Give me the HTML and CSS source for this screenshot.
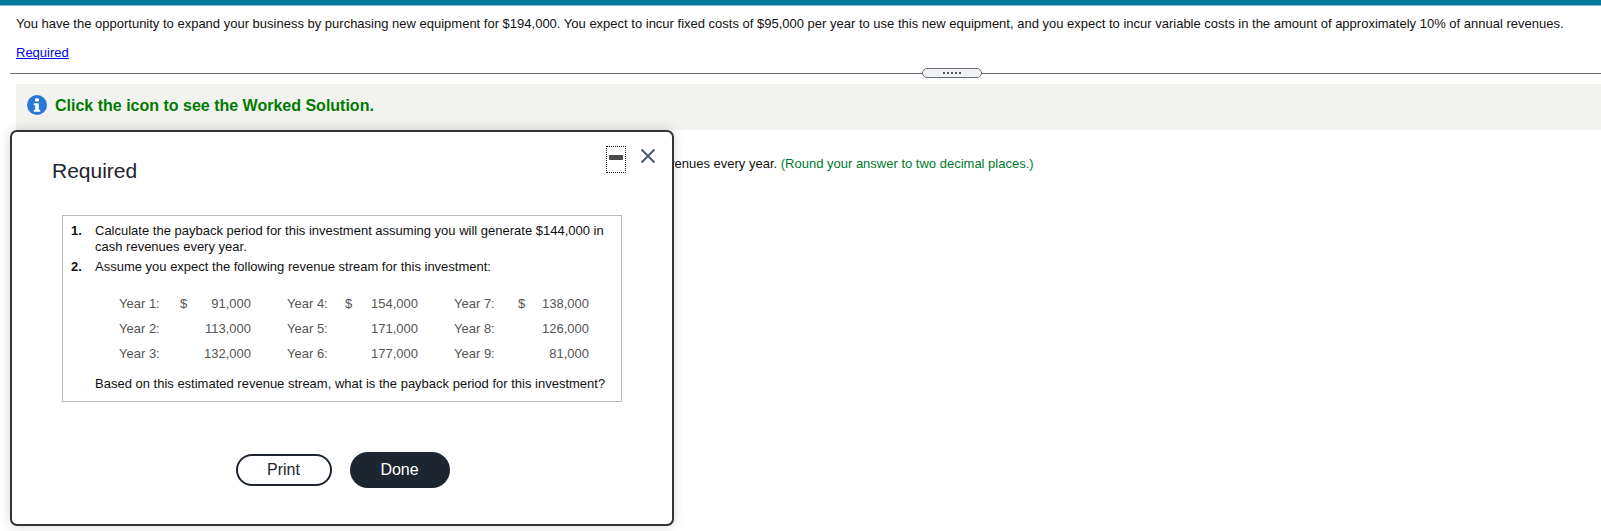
FILE: index.html
```html
<!DOCTYPE html>
<html lang="en">
<head>
<meta charset="utf-8">
<title>Payback period</title>
<link rel="stylesheet" href="styles.css">
</head>
<body>
<div class="topbar"></div>
<main class="page">
  <p class="question">You have the opportunity to expand your business by purchasing new equipment for $194,000. You expect to incur fixed costs of $95,000 per year to use this new equipment, and you expect to incur variable costs in the amount of approximately 10% of annual revenues.</p>
  <p class="req-line"><a href="#" class="req-link">Required</a></p>
  <div class="divider"><span class="handle"><i></i><i></i><i></i><i></i><i></i></span></div>
  <div class="banner">
    <svg class="info" viewBox="0 0 20 20" width="20" height="20" aria-hidden="true"><circle cx="10" cy="10" r="10" fill="#2a78d6"/><rect x="8" y="3.2" width="4" height="3.4" rx="1.4" fill="#fff"/><path d="M6.8 8.2h5v6.6h1.4v2H6.8v-2h1.4v-4.600H6.800z" fill="#fff"/></svg>
    <span class="banner-text">Click the icon to see the Worked Solution.</span>
  </div>
  <p class="prompt">venues every year. <span class="green">(Round your answer to two decimal places.)</span></p>
</main>
<section class="modal">
  <header class="modal-head">
    <h2 class="modal-title">Required</h2>
    <div class="modal-tools">
      <span class="minimize"><span class="minimize-bar"></span></span>
      <svg class="close" viewBox="0 0 16 16" width="16" height="16" aria-hidden="true"><path d="M1.500 1.500l13 13M14.500 1.500l-13 13" stroke="#4d5866" stroke-width="2" fill="none"/></svg>
    </div>
  </header>
  <div class="box">
    <ol class="steps">
      <li class="step"><b class="num">1.</b><span>Calculate the payback period for this investment assuming you will generate $144,000 in cash revenues every year.</span></li>
      <li class="step"><b class="num">2.</b><span>Assume you expect the following revenue stream for this investment:</span></li>
    </ol>
    <table class="years">
      <tr><td class="y1">Year 1:</td><td class="d1">$</td><td class="v1">91,000</td><td class="y2">Year 4:</td><td class="d2">$</td><td class="v2">154,000</td><td class="y3">Year 7:</td><td class="d3">$</td><td class="v3">138,000</td></tr>
      <tr><td class="y1">Year 2:</td><td class="d1"></td><td class="v1">113,000</td><td class="y2">Year 5:</td><td class="d2"></td><td class="v2">171,000</td><td class="y3">Year 8:</td><td class="d3"></td><td class="v3">126,000</td></tr>
      <tr><td class="y1">Year 3:</td><td class="d1"></td><td class="v1">132,000</td><td class="y2">Year 6:</td><td class="d2"></td><td class="v2">177,000</td><td class="y3">Year 9:</td><td class="d3"></td><td class="v3">81,000</td></tr>
    </table>
    <p class="based">Based on this estimated revenue stream, what is the payback period for this investment?</p>
  </div>
  <div class="actions">
    <button class="btn btn-print" type="button">Print</button>
    <button class="btn btn-done" type="button">Done</button>
  </div>
</section>
</body>
</html>
```
FILE: styles.css
```css
* { box-sizing: border-box; }
html, body { margin: 0; padding: 0; background: #fff; }
body {
  font-family: "Liberation Sans", Arial, sans-serif;
  font-size: 13px;
  color: #111;
  height: 531px;
  overflow: hidden;
  position: relative;
}
.topbar { height: 6px; background: #007a9c; border-bottom: 1px solid #7fbccd; }
.page { padding: 0; }
.question { margin: 0; padding: 10px 0 0 16px; line-height: 15px; white-space: nowrap; }
.req-line { margin: 0; padding: 14px 0 0 16px; line-height: 15px; }
.req-link { color: #0000ee; }
.divider {
  margin: 13px 0 0 10px;
  height: 1px;
  background: #6b7078;
  position: relative;
}
.handle {
  position: absolute;
  left: 912px;
  top: -5px;
  width: 60px;
  height: 10px;
  border: 1px solid #6b7078;
  border-radius: 5px;
  background: #f2f3f5;
  display: flex;
  justify-content: center;
  align-items: center;
  gap: 2px;
}
.handle i { width: 2px; height: 2px; background: #555; }
.banner {
  margin: 10px 0 0 16px;
  height: 46px;
  background: #f2f3ee;
  display: flex;
  align-items: center;
  padding: 0 0 3px 11px;
  gap: 8px;
}
.info { flex: none; margin-bottom: 1px; }
.banner-text { font-size: 16px; font-weight: bold; color: #007a00; }
.prompt { margin: 0; padding: 26px 0 0 668px; line-height: 15px; white-space: nowrap; }
.green { color: #007a2c; }

.modal {
  position: absolute;
  left: 10px;
  top: 130px;
  width: 664px;
  height: 396px;
  background: #fff;
  border: 2px solid #333;
  border-radius: 7px;
  box-shadow: 0 0 12px rgba(0, 0, 0, .16);
  display: flex;
  flex-direction: column;
}
.modal-head { display: flex; justify-content: space-between; align-items: flex-start; padding: 14px 16px 0 40px; height: 83px; }
.modal-title { margin: 13px 0 0; font-size: 21px; font-weight: normal; color: #1d2530; line-height: 24px; }
.modal-tools { display: flex; align-items: flex-start; gap: 14px; }
.minimize {
  width: 20px;
  height: 27px;
  border: 1px dotted #222;
  display: flex;
  align-items: center;
  justify-content: center;
  padding-bottom: 5px;
}
.minimize-bar { width: 14px; height: 5px; border-radius: 1px; background: #4a4a4a; }
.close { margin-top: 2px; }
.box {
  margin-left: 50px;
  width: 560px;
  height: 187px;
  border: 1px solid #bbb;
  padding: 7px 0 0 8px;
}
.steps { margin: 0; padding: 0; list-style: none; line-height: 15.500px; }
.step { display: flex; margin-bottom: 5px; padding-right: 8px; }
.num { flex: none; width: 24px; }
.years { border-collapse: collapse; table-layout: fixed; margin: 16px 0 0 48px; color: #555; }
.years td { padding: 0; height: 25px; line-height: 25px; }
.y1 { width: 61px; }
.d1 { width: 20px; }
.v1 { width: 51px; text-align: right; }
.y2 { width: 94px; padding-left: 36px !important; }
.d2 { width: 20px; }
.v2 { width: 53px; text-align: right; }
.y3 { width: 100px; padding-left: 36px !important; }
.d3 { width: 21px; }
.v3 { width: 50px; text-align: right; }
.based { margin: 10px 0 0 24px; line-height: 15px; white-space: nowrap; }
.actions { display: flex; justify-content: center; align-items: center; gap: 18px; margin: 50px 0 0 1px; }
.btn { font-family: inherit; font-size: 16px; border-radius: 18px; padding: 0; }
.btn-print { width: 96px; height: 32px; background: #fff; color: #1d2530; border: 2px solid #1d2530; }
.btn-done { width: 100px; height: 36px; background: #1d2530; color: #fff; border: 0; }
```
